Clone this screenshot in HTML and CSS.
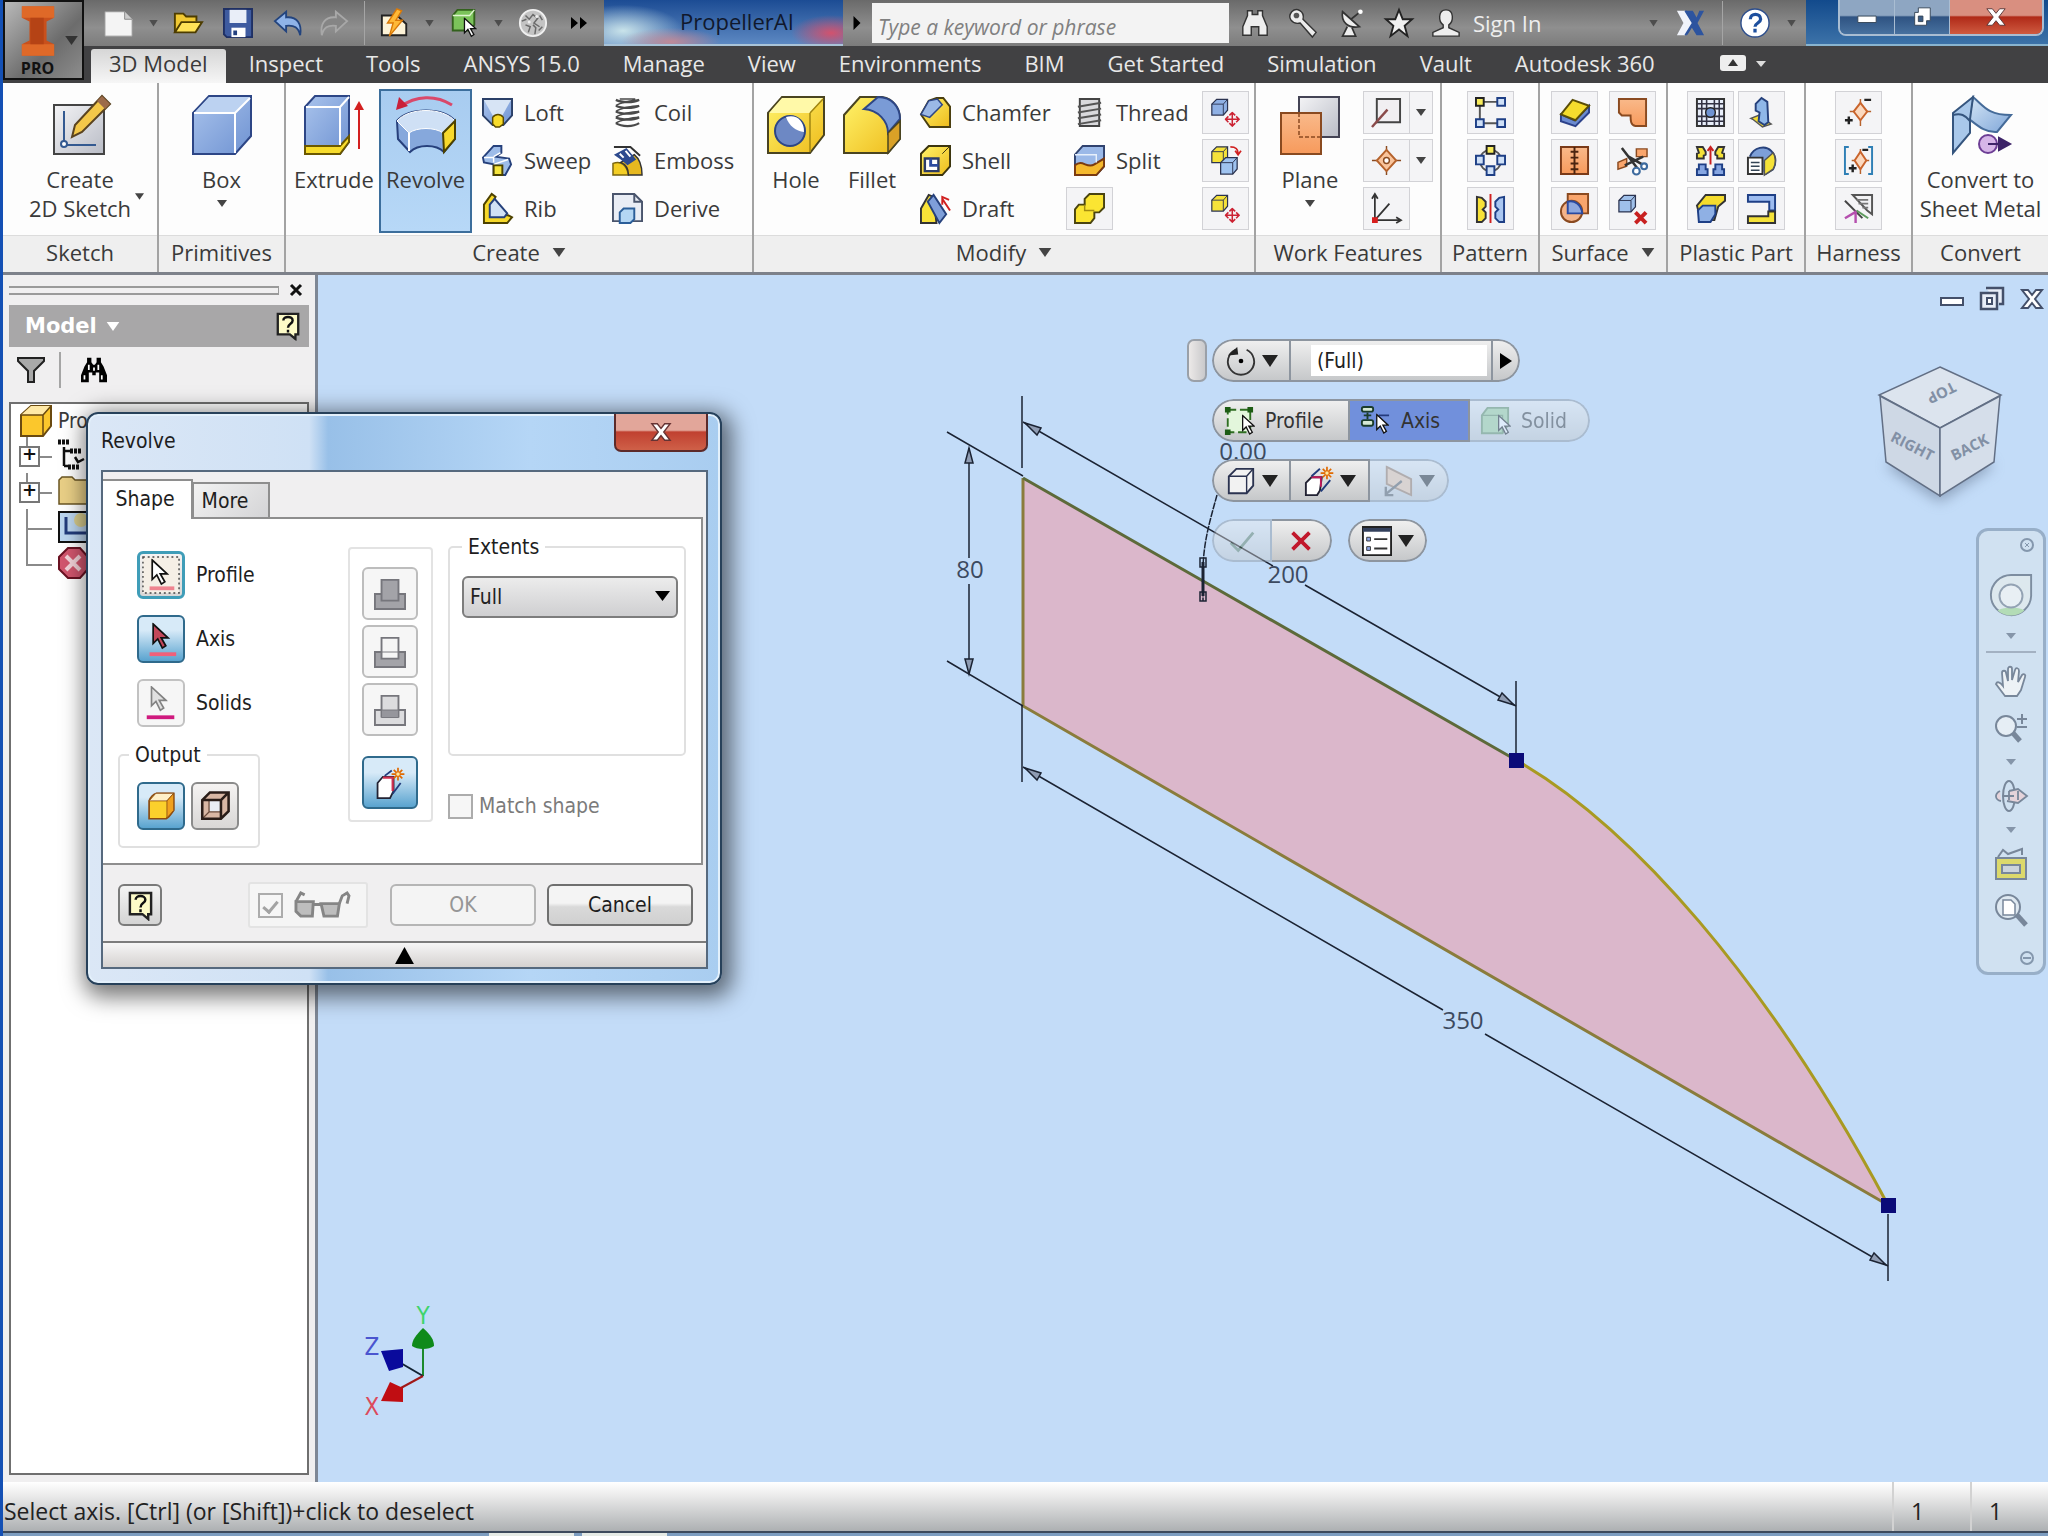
FILE: index.html
```
<!DOCTYPE html>
<html lang="en">
<head>
<meta charset="utf-8">
<title>PropellerAI</title>
<link rel="stylesheet" href="styles.css">
</head>
<body>
<svg class="defs" width="0" height="0" aria-hidden="true">
  <defs>
    <linearGradient id="gYellow" x1="0" y1="0" x2="1" y2="1"><stop offset="0" stop-color="#fff36a"/><stop offset="1" stop-color="#eebb1c"/></linearGradient>
    <linearGradient id="gBlue" x1="0" y1="0" x2="1" y2="1"><stop offset="0" stop-color="#a9c3ec"/><stop offset="1" stop-color="#6f93d2"/></linearGradient>
    <linearGradient id="gOrange" x1="0" y1="0" x2="0" y2="1"><stop offset="0" stop-color="#f9b98a"/><stop offset="1" stop-color="#f79a5c"/></linearGradient>
    <linearGradient id="gSky" x1="0" y1="0" x2="1" y2="1"><stop offset="0" stop-color="#d5e6f6"/><stop offset="1" stop-color="#7fa6d8"/></linearGradient>
    <linearGradient id="gGrey" x1="0" y1="0" x2="1" y2="1"><stop offset="0" stop-color="#f4f4f6"/><stop offset="1" stop-color="#b9bcc6"/></linearGradient>
  </defs>
  <symbol id="cursor" viewBox="0 0 16 24"><path d="M2 1v17l4-4 4 8 3-2-4-7h6z" stroke="#111" stroke-width="1.5"/></symbol>
  <symbol id="cube" viewBox="0 0 32 32"><path d="M3 11 11 3h18v18l-7 8H3z" stroke="#2b3350" stroke-width="2"/><path d="M3 11h19v18M22 11l7-8" fill="none" stroke="#2b3350" stroke-width="1.5"/></symbol>
  <symbol id="star" viewBox="0 0 20 20"><path d="M10 1v18M1 10h18M4 4l12 12M16 4 4 16" stroke="#e06a00" stroke-width="2.4"/><circle cx="10" cy="10" r="3" fill="#ffe9a0" stroke="#e06a00"/></symbol>
  <symbol id="move" viewBox="0 0 16 16"><path d="M8 1v14M1 8h14M5 4l3-3 3 3M5 12l3 3 3-3M4 5 1 8l3 3M12 5l3 3-3 3" fill="none" stroke="#cc2233" stroke-width="1.6"/></symbol>
  <symbol id="tip" viewBox="0 0 28 32"><path d="M3 3h22v22h-3v5l-6-5H3z" fill="#fdfbc8" stroke="#222" stroke-width="2.5"/><path d="M9 10c0-5 10-5 10 0 0 4-5 3-5 8m0 2v3" fill="none" stroke="#111" stroke-width="2.6"/></symbol>
  <symbol id="binoc" viewBox="0 0 32 30"><path d="M8 2h5v4h6V2h5v5l5 12v9h-9v-9h-8v9H3v-9L8 7z"/></symbol>
</svg>

<div class="window">
<header class="top">
  <button class="app" aria-label="Application menu">
    <svg class="app-logo" viewBox="0 0 40 54"><path d="M3 1h34v12l-8 4v20l8 4v12H3V41l8-4V17l-8-4z" fill="#c9501c"/><path d="M3 1h34v12H3zM3 41h34v12H3z" fill="#e8732e" opacity=".7"/><path d="M12 13h14v28H12z" fill="#a83a10" opacity=".6"/></svg>
    <svg class="app-arrow" viewBox="0 0 14 10"><path d="M0 0h14L7 10z"/></svg>
    <span>PRO</span>
  </button>
  <div class="top-rows">
    <div class="titlebar">
      <div class="qat">
        <button class="tool" aria-label="New"><svg viewBox="0 0 32 32"><path d="M1 4h21l8 8v18H1z" fill="#f4f4f4" stroke="#999"/><path d="M22 4v8h8" fill="#ccc" stroke="#888"/></svg></button>
        <i class="dot"></i>
        <button class="tool" aria-label="Open"><svg viewBox="0 0 32 32"><path d="M2 26V6h9l3 3h11v5" fill="#f1c933" stroke="#4d3c00" stroke-width="2"/><path d="M2 26 9 15h22l-7 11z" fill="#ffe257" stroke="#4d3c00" stroke-width="2"/></svg></button>
        <button class="tool save" aria-label="Save"><svg viewBox="0 0 32 32"><path d="M1 1h30v30H4l-3-3z" fill="#3e5ba0" stroke="#1f3064" stroke-width="2"/><path d="M7 2h18v14H7z" fill="#e9eef8"/><path d="M9 21h15v10H9z" fill="#fff"/><path d="M11 24h4v5h-4z" fill="#24407f"/></svg></button>
        <button class="tool" aria-label="Undo"><svg viewBox="0 0 32 32"><path d="M2 14 14 4v6c12-1 17 7 15 19-2-8-6-11-15-10v6z" fill="#8fb3e8" stroke="#23447e" stroke-width="2"/></svg></button>
        <button class="tool" aria-label="Redo" disabled><svg viewBox="0 0 32 32"><path d="M30 14 18 4v6C6 9 1 17 3 29c2-8 6-11 15-10v6z" fill="#858585" stroke="#a8a8a8" stroke-width="2"/></svg></button>
        <i class="vsep"></i>
        <button class="tool" aria-label="Update"><svg viewBox="0 0 32 32"><path d="M2 8h16l10 9v12H2z" fill="#fdf3d7" stroke="#222" stroke-width="2"/><path d="m18 1-10 15h6l-4 14 14-17h-7l6-10z" fill="#ffb937" stroke="#d97908" stroke-width="1.5"/></svg></button>
        <i class="dot"></i>
        <button class="tool" aria-label="Select"><svg viewBox="0 0 32 32"><path d="M4 8 9 2h18v16l-4 6H4z" fill="#7bc35a" stroke="#33611d" stroke-width="2"/><path d="M4 8h18l5-6" fill="none" stroke="#def5cf" stroke-width="1.5"/><use href="#cursor" x="14" y="10" width="16" height="22" fill="#fff"/></svg></button>
        <i class="dot"></i>
        <button class="tool" aria-label="Appearance"><svg viewBox="0 0 32 32"><circle cx="16" cy="16" r="14" fill="#c3c3c3" stroke="#f0f0f0" stroke-width="2"/><path d="M8 8l4 4 4-5 5 4-4 5 6 4M8 18l5 2-2 6M16 18l3 3-1 7M4 14l5-2M23 8l3 5M22 24l4-4" fill="none" stroke="#6a6a6a" stroke-width="1.6"/><circle cx="20" cy="9" r="1.6" fill="#eee"/><circle cx="12" cy="15" r="1.6" fill="#eee"/></svg></button>
        <button class="tool more" aria-label="More commands"><svg viewBox="0 0 18 12"><path d="M1 0l7 6-7 6zM10 0l7 6-7 6z" fill="#000"/></svg></button>
      </div>
      <div class="doc-title">PropellerAI</div>
      <div class="info">
        <svg class="expand" viewBox="0 0 8 16"><path d="M0 0l8 8-8 8z"/></svg>
        <input class="search" type="text" placeholder="Type a keyword or phrase" aria-label="Search">
        <button class="tool" aria-label="Find"><svg viewBox="0 0 32 30"><use href="#binoc" fill="#eee" stroke="#333" stroke-width="1.5"/></svg></button>
        <button class="tool" aria-label="Subscription"><svg viewBox="0 0 32 32"><path d="M4 4c5-5 14-1 12 8l14 14-4 5-13-15C4 18-1 10 4 4z" fill="#ececec" stroke="#333" stroke-width="1.5"/><circle cx="9" cy="8" r="3" fill="#555"/></svg></button>
        <button class="tool" aria-label="Communication"><svg viewBox="0 0 32 32"><path d="M7 4c-2 11 6 18 18 16zM16 12l11-9M12 20 7 30h14l-4-9" fill="#eee" stroke="#333" stroke-width="1.8"/><circle cx="26" cy="4" r="2.5" fill="#fff"/></svg></button>
        <button class="tool" aria-label="Favorites"><svg viewBox="0 0 32 32"><path d="m16 2 4 10h10l-8 7 3 11-9-7-9 7 3-11-8-7h10z" fill="#f0f0f0" stroke="#222" stroke-width="2"/></svg></button>
        <button class="signin"><svg viewBox="0 0 32 32"><path d="M16 2c9 0 8 13 3 16v3l11 5v4H2v-4l11-5v-3C8 15 7 2 16 2z" fill="#eee" stroke="#333" stroke-width="1.5"/></svg>Sign In</button>
        <i class="dot push"></i>
        <button class="tool" aria-label="Exchange"><svg viewBox="0 0 32 32"><path d="M11 3h8l4 7 3-7h5l-7 13 7 13h-8l-5-8-5 8z" fill="#2d549f"/><path d="M2 3h9l8 13-8 13H2l7-13z" fill="#f0f3fa"/><path d="m11 3 8 13-8 13" fill="none" stroke="#2d549f" stroke-width="2"/></svg></button>
        <i class="vsep"></i>
        <button class="tool" aria-label="Help"><svg viewBox="0 0 32 32"><circle cx="16" cy="16" r="15" fill="#fff" stroke="#2d4e8c" stroke-width="1.5"/><path d="M11 12c0-7 11-7 11 0 0 4-6 4-6 8m0 2v4" fill="none" stroke="#1d4f9e" stroke-width="3.5"/></svg></button>
        <i class="dot"></i>
      </div>
      <div class="glass">
        <div class="wincontrols">
          <button aria-label="Minimize"><svg viewBox="0 0 24 20"><path d="M2 9h20v7H2z" fill="#fff" stroke="#345" stroke-width="1"/></svg></button>
          <button aria-label="Restore"><svg viewBox="0 0 24 24"><path d="M8 2h13v14h-4v5H4V7h4z" fill="#fff" stroke="#345"/><path d="M8 11h5v6H8z" fill="#3a5c86" stroke="#345"/></svg></button>
          <button class="close" aria-label="Close"><svg viewBox="0 0 24 22"><path d="m2 2h6l4 5 4-5h6l-7 9 7 9h-6l-4-5-4 5H2l7-9z" fill="#fff" stroke="#533"/></svg></button>
        </div>
      </div>
    </div>
    <nav class="tabs">
      <a class="on" href="#model">3D Model</a><a href="#inspect">Inspect</a><a href="#tools">Tools</a><a href="#ansys">ANSYS 15.0</a><a href="#manage">Manage</a><a href="#view">View</a><a href="#env">Environments</a><a href="#bim">BIM</a><a href="#start">Get Started</a><a href="#sim">Simulation</a><a href="#vault">Vault</a><a href="#a360">Autodesk 360</a>
      <button class="minimize" aria-label="Minimize ribbon"><svg viewBox="0 0 48 16"><rect width="26" height="16" rx="3" fill="#eee"/><path d="m13 4 5 7H8z" fill="#333"/><path d="M36 6h10l-5 6z" fill="#ddd"/></svg></button>
    </nav>
  </div>
</header>

<div class="ribbon">
  <section class="panel p-sketch">
    <div class="tools">
      <button class="big wide"><svg viewBox="0 0 60 60"><path d="M4 10h50v49H4z" fill="url(#gGrey)" stroke="#444" stroke-width="2"/><path d="M14 16v34h32" fill="none" stroke="#345a91" stroke-width="2"/><circle cx="14" cy="49" r="3" fill="#fff" stroke="#345a91" stroke-width="2"/><path d="m22 42 3-12L52 1l8 8-28 28z" fill="#f3c74a" stroke="#5a4320" stroke-width="2"/><path d="m47 6 8 8 5-5-8-8z" fill="#9c6b4a"/></svg><span>Create<br>2D Sketch</span><svg class="side-arrow" viewBox="0 0 10 7"><path d="M0 0h10L5 7z"/></svg></button>
    </div>
    <h2>Sketch</h2>
  </section>
  <section class="panel p-prim">
    <div class="tools">
      <button class="big wide"><svg viewBox="0 0 60 60"><path d="M1 18 17 1h42v40L43 59H1z" fill="url(#gBlue)" stroke="#2d4686" stroke-width="2"/><path d="M2 18 17 2h41L43 18z" fill="#bcd2f1"/><path d="M2 18h41v40M43 18 58 3" fill="none" stroke="#fff" stroke-width="2"/></svg><span>Box</span><svg class="arrow" viewBox="0 0 10 7"><path d="M0 0h10L5 7z"/></svg></button>
    </div>
    <h2>Primitives</h2>
  </section>
  <section class="panel p-create">
    <div class="tools">
      <button class="big"><svg viewBox="0 0 60 60"><path d="M1 12 11 1h34v46L36 59H1z" fill="url(#gBlue)" stroke="#2d4686" stroke-width="2"/><path d="M1 51h35l9-10v6L36 59H1z" fill="#f7dc2d" stroke="#6b5800" stroke-width="2"/><path d="M2 12h34v38M36 12 45 2" fill="none" stroke="#fff" stroke-width="2"/><path d="M55 54V10" stroke="#d32020" stroke-width="2"/><path d="m50 15 5-9 5 9z" fill="#d32020"/></svg><span>Extrude</span></button>
      <button class="big active"><svg viewBox="0 0 60 60"><path d="M4 12C20 0 40 0 56 10" fill="none" stroke="#d9486a" stroke-width="3"/><path d="m0 15 3-13 9 9z" fill="#c9203a"/><path d="M1 26c12-14 46-14 58 0v18L48 57c-8-8-26-8-34 0L2 44z" fill="#86a8dc" stroke="#27407c" stroke-width="2"/><path d="M1 26c12-14 46-14 58 0L47 38c-8-6-26-6-34 0z" fill="#cfe0f5" stroke="#fff"/><path d="M47 38 59 26v18L48 57z" fill="#f8d92c" stroke="#4d4200" stroke-width="2"/><path d="M13 38v18" stroke="#fff" stroke-width="2"/></svg><span>Revolve</span></button>
      <div class="list l1">
        <button><svg viewBox="0 0 32 32"><path d="M1 2h30v17l-9 10H11L1 19z" fill="url(#gBlue)" stroke="#2b4068" stroke-width="2"/><path d="M2 3h28l-9 16H11z" fill="#d7e4f5"/><path d="M11 21c3-4 8-4 11 0v7l-4 3h-4l-3-3z" fill="#f8dc2b" stroke="#5b4b00" stroke-width="1.5"/></svg>Loft</button>
        <button><svg viewBox="0 0 32 32"><path d="M1 13 12 1h8v7l-6 4 14 2 2 6-6 11H12V20L2 18z" fill="#9dbce9" stroke="#26417c" stroke-width="2"/><path d="M2 13h10v5m0-6 7-4M12 20l15-5" fill="none" stroke="#fff" stroke-width="1.5"/><path d="M12 21h9v10h-9z" fill="#f5e53e" stroke="#4b4200" stroke-width="2"/></svg>Sweep</button>
        <button><svg viewBox="0 0 32 32"><path d="M2 31V12L10 1l4 3-4 8v11h17l4 2-5 6z" fill="#f6d82a" stroke="#4d4200" stroke-width="2"/><path d="M8 12 13 6l13 15-3 4H8z" fill="#d1e1f4" stroke="#26417c" stroke-width="2"/></svg>Rib</button>
      </div>
      <div class="list l2">
        <button><svg viewBox="0 0 32 32"><g fill="none" stroke="#4a4a4a" stroke-width="2.4"><path d="M4 3c6 3 18 3 24 0M4 9c6 3 18 3 24 0M4 15c6 3 18 3 24 0M4 21c6 3 18 3 24 0M4 27c6 4 18 4 24 0"/><path d="M28 3C20 3 8 6 4 9M28 9C20 9 8 12 4 15M28 15c-8 0-20 3-24 6M28 21c-8 0-20 3-24 6M8 2h16" stroke-width="1.6"/></g></svg>Coil</button>
        <button><svg viewBox="0 0 32 32"><path d="M1 19c8-3 14 1 16 12H1z" fill="#f4ce25" stroke="#7a6510" stroke-width="1.5"/><path d="M17 31c0-6-3-11-8-13l14-8c5 4 8 10 8 21z" fill="#e6b820" stroke="#333" stroke-width="1.5"/><path d="M2 2h17l10 9" fill="none" stroke="#333" stroke-width="2"/><path d="M2 10 15 3l10 12-9 6-7-6z" fill="#2d4a8e"/><path d="m8 9 4 4m2-7 5 6" stroke="#fff" stroke-width="2"/></svg>Emboss</button>
        <button><svg viewBox="0 0 32 32"><path d="M1 1h22l8 8v20H1z" fill="#e9edf5" stroke="#4a556d" stroke-width="2"/><path d="M23 1v8h8" fill="none" stroke="#4a556d" stroke-width="2"/><path d="m8 20 4-4h11v11l-4 4H8z" fill="#b4d6f3" stroke="#2b5e99" stroke-width="2"/></svg>Derive</button>
      </div>
    </div>
    <h2>Create<svg class="h-arrow" viewBox="0 0 14 10"><path d="M0 0h14L7 10z"/></svg></h2>
  </section>
  <section class="panel p-modify">
    <div class="tools">
      <button class="big mid"><svg viewBox="0 0 60 60"><path d="M2 18 16 2h42v38L44 58H2z" fill="url(#gYellow)" stroke="#4a4420" stroke-width="2"/><path d="M3 18 16 3h41L44 18z" fill="#fff9a8"/><path d="M44 18v39M44 18 57 4" stroke="#a08512" stroke-width="1.5"/><circle cx="24" cy="36" r="15" fill="#6d88c4" stroke="#2d4686" stroke-width="2"/><path d="M20 22c10-3 18 3 18 15-8-1-15-6-18-15z" fill="#fff"/></svg><span>Hole</span></button>
      <button class="big mid"><svg viewBox="0 0 60 60"><path d="M2 20 18 2h22c12 2 18 12 18 22v20L46 58H2z" fill="url(#gYellow)" stroke="#4a4420" stroke-width="2"/><path d="M22 14 36 2c14 0 22 10 22 22L46 38C46 26 36 15 22 14z" fill="#7a9bd6" stroke="#2d4686" stroke-width="2"/><path d="M46 38 58 26v18L46 58z" fill="#d9a127" stroke="#4a4420" stroke-width="1.5"/></svg><span>Fillet</span></button>
      <div class="list l3">
        <button><svg viewBox="0 0 32 32"><path d="M1 18 9 4l8-3h7l7 9v21H10z" fill="url(#gYellow)" stroke="#4a3f10" stroke-width="2"/><path d="M1 18 9 4l9-2 5 6-13 13z" fill="#9bb8e6" stroke="#2d4686" stroke-width="1.5"/></svg>Chamfer</button>
        <button><svg viewBox="0 0 32 32"><path d="M1 9 9 1h22v21l-8 9H1z" fill="url(#gYellow)" stroke="#3c350f" stroke-width="2"/><path d="M5 14h14v13H5z" fill="#fff" stroke="#2d3c66" stroke-width="2.5"/><path d="M11 14v7h8" fill="none" stroke="#2d4ba0" stroke-width="3"/><path d="m23 9 8-8" stroke="#3c350f"/></svg>Shell</button>
        <button><svg viewBox="0 0 32 32"><path d="M1 31V16L9 2l5 2 3 27z" fill="#f8e238" stroke="#333" stroke-width="2"/><path d="m8 9 6-7 13 20-7 9z" fill="#7f9fd9" stroke="#26417c" stroke-width="2"/><path d="m31 18-8-12m0 6V4l7 3" fill="none" stroke="#d02020" stroke-width="2"/></svg>Draft</button>
      </div>
      <div class="list l4">
        <button><svg viewBox="0 0 32 32"><path d="M6 2h20v28H6z" fill="#d9d9dc" stroke="#444" stroke-width="2"/><path d="M4 10 28 6M4 16l24-4M4 22l24-4M4 28l24-4" stroke="#555" stroke-width="2"/></svg>Thread</button>
        <button><svg viewBox="0 0 32 32"><path d="M1 10 9 1h22v21l-8 9H1z" fill="#9bb9e8" stroke="#30426e" stroke-width="2"/><path d="M1 21c8-7 12 4 20-1l10-6v8l-8 9H1z" fill="#f5b92e" stroke="#7a3a10" stroke-width="2"/><path d="M1 10h22v8" fill="none" stroke="#e7f0fb" stroke-width="1.5"/></svg>Split</button>
        <button class="sq" aria-label="Combine"><svg viewBox="0 0 32 32"><path d="M1 17l4-5h6V6l5-5h15v14l-5 5h-5v6l-4 5H1z" fill="#fbe532" stroke="#4a4410" stroke-width="2"/><path d="M11 12v6h10" fill="none" stroke="#a48d10" stroke-width="1.5"/></svg></button>
      </div>
      <div class="sqs">
        <button class="sq" aria-label="Move face"><svg viewBox="0 0 32 32"><use href="#cube" width="20" height="21" fill="#8fb0e4"/><use href="#move" x="15" y="15" width="16" height="16"/></svg></button>
        <button class="sq" aria-label="Copy object"><svg viewBox="0 0 32 32"><use href="#cube" width="20" height="20" fill="#f5e23a"/><use href="#cube" x="9" y="11" width="21" height="21" fill="#9fc3f0"/><path d="M21 2c6 0 8 2 8 7m-3-3 3 4 3-4" fill="none" stroke="#d02020" stroke-width="1.8"/></svg></button>
        <button class="sq" aria-label="Move bodies"><svg viewBox="0 0 32 32"><use href="#cube" width="20" height="21" fill="#f5e23a"/><use href="#move" x="15" y="15" width="16" height="16"/></svg></button>
      </div>
    </div>
    <h2>Modify<svg class="h-arrow" viewBox="0 0 14 10"><path d="M0 0h14L7 10z"/></svg></h2>
  </section>
  <section class="panel p-work">
    <div class="tools">
      <button class="big plane"><svg viewBox="0 0 60 60"><path d="M19 2h40v40H19z" fill="url(#gGrey)" stroke="#445" stroke-width="2"/><path d="M1 18h40v41H1z" fill="url(#gOrange)" stroke="#8a4a20" stroke-width="2"/><path d="M19 18v24h22" fill="none" stroke="#8a4a20" stroke-width="1.5" stroke-dasharray="4 2"/></svg><span>Plane</span><svg class="arrow" viewBox="0 0 10 7"><path d="M0 0h10L5 7z"/></svg></button>
      <div class="sqs">
        <div class="split"><button class="sq" aria-label="Axis"><svg viewBox="0 0 32 32"><path d="M6 2h24v24H6z" fill="#f1eff2" stroke="#444" stroke-width="2"/><path d="M1 31 17 13" stroke="#8a4a4a" stroke-width="2.5"/></svg></button><button class="drop" aria-label="Axis options"><svg viewBox="0 0 10 7"><path d="M0 0h10L5 7z"/></svg></button></div>
        <div class="split"><button class="sq" aria-label="Point"><svg viewBox="0 0 32 32"><path d="M16 1v30M1 16h30" stroke="#8a4a20" stroke-width="1.5"/><path d="m16 5 10 11-10 11L6 16z" fill="#f9c49c" stroke="#b5622c" stroke-width="2"/><circle cx="16" cy="16" r="3" fill="#fff" stroke="#8a4a20" stroke-width="1.5"/></svg></button><button class="drop" aria-label="Point options"><svg viewBox="0 0 10 7"><path d="M0 0h10L5 7z"/></svg></button></div>
        <button class="sq" aria-label="UCS"><svg viewBox="0 0 32 32"><path d="M4 28V2m-3 4 3-5 3 5M4 28h26m-4-3 5 3-5 3M4 28 19 11" fill="none" stroke="#333" stroke-width="1.8"/><path d="M1 25h6v6H1z" fill="#d81e1e"/></svg></button>
      </div>
    </div>
    <h2>Work Features</h2>
  </section>
  <section class="panel p-pattern">
    <div class="tools center">
      <div class="sqs">
        <button class="sq" aria-label="Rectangular"><svg viewBox="0 0 32 32"><path d="M5 5h22M5 5v22h22" stroke="#555" stroke-width="2" fill="none"/><path d="M1 1h8v8H1z" fill="#f8ec5b" stroke="#222" stroke-width="2"/><path d="M23 1h8v8h-8zM1 23h8v8H1zM23 23h8v8h-8z" fill="#cfe0f7" stroke="#1e3f86" stroke-width="2"/></svg></button>
        <button class="sq" aria-label="Circular"><svg viewBox="0 0 32 32"><circle cx="16" cy="16" r="11" fill="none" stroke="#555" stroke-width="1.8"/><path d="M12 1h8v8h-8z" fill="#f8ec5b" stroke="#222" stroke-width="2"/><path d="M1 11h8v9H1zM23 11h8v9h-8zM12 22h8v9h-8z" fill="#cfe0f7" stroke="#1e3f86" stroke-width="2"/></svg></button>
        <button class="sq" aria-label="Mirror"><svg viewBox="0 0 32 32"><path d="M2 4l5 1 4 4v5l-3 3 3 3v6l-4 4H2z" fill="#f8e238" stroke="#333" stroke-width="2"/><path d="M30 4l-5 1-4 4v5l3 3-3 3v6l4 4h5z" fill="#a9c6f1" stroke="#1e3f86" stroke-width="2"/><path d="M16 1v30" stroke="#d02020" stroke-width="2"/></svg></button>
      </div>
    </div>
    <h2>Pattern</h2>
  </section>
  <section class="panel p-surface">
    <div class="tools center">
      <div class="sqs">
        <button class="sq" aria-label="Thicken"><svg viewBox="0 0 32 32"><path d="m2 18 14 6L31 9v7L17 30 2 25z" fill="#6c8bd0" stroke="#2c418a" stroke-width="2"/><path d="M2 18 14 3l17 6-14 15z" fill="#f5dc2d" stroke="#5a4d08" stroke-width="2"/></svg></button>
        <button class="sq" aria-label="Stitch"><svg viewBox="0 0 32 32"><path d="M2 2h28v28H2z" fill="url(#gOrange)" stroke="#7a3a18" stroke-width="2"/><path d="M16 2v28M12 7h8M12 13h8M12 19h8M12 25h8" stroke="#4a2410" stroke-width="2"/></svg></button>
        <button class="sq" aria-label="Sculpt"><svg viewBox="0 0 32 32"><path d="M9 1h21v20H9z" fill="#f9a56c" stroke="#8a4a20" stroke-width="2"/><circle cx="13" cy="19" r="11" fill="#f5b48a" stroke="#8a4a20" stroke-width="2"/><path d="M9 9c7-2 14 3 15 12H9z" fill="#8fa8de" stroke="#2b4aa0" stroke-width="2"/></svg></button>
      </div>
      <div class="sqs">
        <button class="sq" aria-label="Patch"><svg viewBox="0 0 32 32"><path d="M2 2h28v28H19c-5-1-5-6-5-11H5l-3-3z" fill="url(#gOrange)" stroke="#8a4a20" stroke-width="2"/></svg></button>
        <button class="sq" aria-label="Trim"><svg viewBox="0 0 32 32"><path d="M20 4h11v8H20zM1 18l9-4v8l-9 3z" fill="#f9a56c" stroke="#8a4a20" stroke-width="1.5"/><path d="m5 3 16 21M27 12 8 21M12 12l14 8" stroke="#333" stroke-width="2.6"/><circle cx="20" cy="27" r="3.5" fill="#fff" stroke="#3d6a9e" stroke-width="2.2"/><circle cx="28" cy="22" r="3" fill="#fff" stroke="#3d6a9e" stroke-width="2.2"/></svg></button>
        <button class="sq" aria-label="Delete face"><svg viewBox="0 0 32 32"><use href="#cube" width="21" height="22" fill="#9fc0ea"/><path d="m19 20 11 11M30 20 19 31" stroke="#c82020" stroke-width="4"/></svg></button>
      </div>
    </div>
    <h2>Surface<svg class="h-arrow" viewBox="0 0 14 10"><path d="M0 0h14L7 10z"/></svg></h2>
  </section>
  <section class="panel p-plastic">
    <div class="tools center tight">
      <div class="sqs">
        <button class="sq" aria-label="Grill"><svg viewBox="0 0 32 32"><path d="M2 2h28v28H2z" fill="#e8eefa" stroke="#333" stroke-width="2"/><path d="M2 7h28M2 12h28M2 20h28M2 25h28M7 2v28M12 2v28M20 2v28M25 2v28" stroke="#334" stroke-width="1.6"/><circle cx="16" cy="16" r="5" fill="#6f93d2" stroke="#222" stroke-width="1.5"/></svg></button>
        <button class="sq" aria-label="Boss"><svg viewBox="0 0 32 32"><path d="M2 2h6l3 5v3l-2 1v3H2V9l2-1zM30 2h-6l-3 5v3l2 1v3h7V9l-2-1z" fill="#f5e238" stroke="#333" stroke-width="2"/><path d="M4 20h7v5h2v6H2v-6h2zM28 20h-7v5h-2v6h11v-6h-2z" fill="#86a6e2" stroke="#1e3f86" stroke-width="2"/><path d="M16 20V2m-3 4 3-4 3 4" fill="none" stroke="#c82020" stroke-width="2"/></svg></button>
        <button class="sq" aria-label="Rest"><svg viewBox="0 0 32 32"><path d="M2 13 11 2h20v6l-7 6-4 14H6z" fill="#f5dc2d" stroke="#333" stroke-width="2"/><path d="m3 18 5-5h13v9l-5 8H4z" fill="#8fb0e4" stroke="#1e3f86" stroke-width="2"/></svg></button>
      </div>
      <div class="sqs">
        <button class="sq" aria-label="Snap fit"><svg viewBox="0 0 32 32"><path d="m5 22 8-3 13 9-9 3-10-8z" fill="#f5dc2d" stroke="#555" stroke-width="1.5"/><path d="m13 25 1-9-4-2V7l6-6 6 4 1 21-4 3z" fill="#8fb7e8" stroke="#26417c" stroke-width="2"/></svg></button>
        <button class="sq" aria-label="Rule fillet"><svg viewBox="0 0 32 32"><path d="M4 12C8 2 20 0 26 6s5 14 2 19l-8 5" fill="#7d9fd8" stroke="#26417c" stroke-width="2"/><path d="m19 16 9-8c3 4 3 12 0 17l-9 6z" fill="#f5e238" stroke="#555" stroke-width="1.5"/><path d="M2 13h15v17H2z" fill="#fff" stroke="#333" stroke-width="2"/><path d="M5 18h9M5 22h9M5 26h9" stroke="#345" stroke-width="1.6"/></svg></button>
        <button class="sq" aria-label="Lip"><svg viewBox="0 0 32 32"><path d="M2 2h28v16h-6v-9H2z" fill="#9dbcf0" stroke="#1e3f86" stroke-width="2"/><path d="M2 24h21v-5h7v12H2z" fill="#f5e238" stroke="#333" stroke-width="2"/></svg></button>
      </div>
    </div>
    <h2>Plastic Part</h2>
  </section>
  <section class="panel p-harness">
    <div class="tools center">
      <div class="sqs">
        <button class="sq" aria-label="Place pin"><svg viewBox="0 0 32 32"><path d="M18 2v28M7 15h22" stroke="#b5622c" stroke-width="1.5"/><path d="m18 6 7 9-7 9-7-9z" fill="#fbd9bf" stroke="#c9642c" stroke-width="2"/><path d="M22 3h7M2 24h8M6 20v8" stroke="#222" stroke-width="2.5"/></svg></button>
        <button class="sq" aria-label="Place pin group"><svg viewBox="0 0 32 32"><path d="M18 4v26M9 16h18" stroke="#b5622c" stroke-width="1.5"/><path d="m18 7 6 9-6 9-6-9z" fill="#fbd9bf" stroke="#c9642c" stroke-width="2"/><path d="M20 5h6M6 24h8M10 20v8" stroke="#222" stroke-width="2.5"/><path d="M6 2H2v28h4M26 2h4v28h-4" fill="none" stroke="#2e7fb5" stroke-width="2"/></svg></button>
        <button class="sq" aria-label="Harness properties"><svg viewBox="0 0 32 32"><path d="M10 2h20v20l-5-4z" fill="#f2f2f4" stroke="#555" stroke-width="2"/><path d="M14 7h12M16 11h10M20 15h6" stroke="#777" stroke-width="1.8"/><path d="m2 8 18 18" stroke="#444" stroke-width="2"/><path d="m2 26 12-7M13 18v13" stroke="#b54fae" stroke-width="2.5"/><path d="m14 18 12 8" stroke="#5d9a5d" stroke-width="2"/></svg></button>
      </div>
    </div>
    <h2>Harness</h2>
  </section>
  <section class="panel p-convert">
    <div class="tools">
      <button class="big wide"><svg viewBox="0 0 60 60"><path d="M22 2c10 8 14 18 38 18l-14 17C34 38 26 30 18 24z" fill="url(#gSky)" stroke="#456b99" stroke-width="2"/><path d="M2 18 22 2l-3 22v14L2 58z" fill="#a9c8ea" stroke="#35557e" stroke-width="2"/><path d="M2 20c8-2 12 0 17 6" fill="none" stroke="#35557e" stroke-width="2"/><circle cx="37" cy="49" r="9" fill="#d6b6e8" stroke="#6d3e95" stroke-width="2"/><path d="M37 49h14m-3-6 11 6-11 6z" fill="#3d2468" stroke="#3d2468" stroke-width="2"/></svg><span>Convert to<br>Sheet Metal</span></button>
    </div>
    <h2>Convert</h2>
  </section>
</div>

<main class="work">
  <aside class="browser">
    <div class="grip"><i></i><button aria-label="Close panel"><svg viewBox="0 0 12 12"><path d="m1 1 10 10M11 1 1 11" stroke="#111" stroke-width="3"/></svg></button></div>
    <div class="browser-head"><span>Model</span><svg class="h-arrow" viewBox="0 0 14 10"><path d="M0 0h14L7 10z"/></svg><button aria-label="Help"><svg viewBox="0 0 28 32"><use href="#tip"/></svg></button></div>
    <div class="browser-tools">
      <button aria-label="Filter"><svg viewBox="0 0 28 26"><path d="M1 1h26v3L17 14v11h-6V14L1 4z" fill="#a9a9a9" stroke="#222" stroke-width="2"/></svg></button>
      <i></i>
      <button aria-label="Find"><svg viewBox="0 0 32 30"><path d="M8 1h5v5l2 3h2l2-3V1h5v5l3 5 4 10v8h-9V18h-4v3h-4v-3h-4v11H1v-8l4-10 3-5z"/><path d="M4 21h2v5H4zM24 21h2v5h-2zM15 12h2v4h-2zM9 9h2v6H9zM20 9h2v6h-2z" fill="#fff"/></svg></button>
    </div>
    <div class="tree">
      <div class="root"><svg viewBox="0 0 34 34"><path d="M2 11 12 2h20v20L24 32H2z" fill="#fbc72c" stroke="#6a4a10" stroke-width="2"/><path d="M2 11h22l8-9H12z" fill="#ffe9a6"/><path d="M2 11h22v21m0-21 8-9" fill="none" stroke="#6a4a10" stroke-width="1.5"/></svg><span>Pro</span></div>
      <ul>
        <li class="plus"><svg viewBox="0 0 30 32"><path d="M0 3h12M12 12h12M10 28h11" stroke="#111" stroke-width="5" stroke-dasharray="3 1"/><path d="M6 8v19M6 12h6M6 27h4M17 18l3 5 6-3" fill="none" stroke="#111" stroke-width="2.5"/></svg></li>
        <li class="plus"><svg viewBox="0 0 30 32"><path d="M1 5l3-3h10l3 3h13v24H1z" fill="#e9cf86" stroke="#6a5523" stroke-width="1.5"/></svg></li>
        <li><svg viewBox="0 0 30 32"><path d="M1 1h34v30H1z" fill="#bcd6ef" stroke="#111" stroke-width="2"/><path d="M8 6v16h24" fill="none" stroke="#223c7c" stroke-width="3"/><circle cx="23" cy="9" r="7" fill="#d9ce8e"/></svg></li>
        <li><svg viewBox="0 0 30 32"><path d="m10 1 12 0 8 9v12l-8 9H10l-9-9V10z" fill="#d2566e" stroke="#6a1222" stroke-width="2"/><path d="m8 9 14 14M22 9 8 23" stroke="#f3d3d9" stroke-width="4"/></svg></li>
      </ul>
    </div>
  </aside>

  <div class="canvas">
    <svg class="drawing" viewBox="318 275 1730 1207" preserveAspectRatio="xMinYMin meet">
      <path d="M1023 478 1516 760C1630 825 1766 977 1888 1205L1023 706z" fill="#dbb7cb"/>
      <g fill="none" stroke-width="3">
        <path d="M1023 478v228l865 499" stroke="#8a7c3c"/>
        <path d="m1023 478 180 103 313 179" stroke="#5d6a3a"/>
        <path d="M1516 760C1630 825 1766 977 1888 1205" stroke="#a89a22"/>
      </g>
      <g fill="none" stroke="#1b2333" stroke-width="1.5">
        <path d="M1022 396v72M1516 681v72M1022 706v76M1888 1214v67M947 432l76 44M947 661l76 45"/>
        <path d="M1023 422l250 144M1305 585l211 121M1023 767l420 243M1485 1034l403 232M969 448v110M969 584v90"/>
        <path d="M1217 495c-6 22-13 44-14 72v34" stroke-dasharray="7 1"/>
        <path d="M1203 562v34" stroke-width="3"/>
        <path d="M1200 558h6v9h-6zM1200 592h6v9h-6z"/>
      </g>
      <g fill="#8f9cb3" stroke="#1b2333" stroke-width="1.5">
        <path d="m1025 423 16 5-4 7zM1514 705l-16-5 4-7zM1025 768l16 5-4 7zM1886 1265l-16-5 4-7zM969 448l-4 15h8zM969 674l-4-15h8z"/>
      </g>
      <path d="M1509 753h15v15h-15zM1881 1198h15v15h-15z" fill="#0b0b78"/>
      <g class="dims"><text x="1288" y="583" text-anchor="middle">200</text><text x="970" y="578" text-anchor="middle">80</text><text x="1463" y="1029" text-anchor="middle">350</text><text x="1243" y="460" text-anchor="middle">0.00</text></g>
      <g class="triad">
        <path d="M423 1376v-42" stroke="#1c8a2c" stroke-width="2"/><path d="m423 1376-24-14" stroke="#123" stroke-width="2"/><path d="m423 1376-24 13" stroke="#a01818" stroke-width="2"/>
        <path d="M423 1328c8 7 11 12 11 18-5 4-17 4-22 0 0-6 4-11 11-18z" fill="#0f8a1a"/>
        <path d="m381 1351 22-2v18l-14 4z" fill="#0a0a9c"/><path d="m381 1401 9-19 13 6v14z" fill="#c00d12"/>
        <text x="423" y="1324" text-anchor="middle" fill="#3fd46c">Y</text><text x="372" y="1355" text-anchor="middle" fill="#4a55cf">Z</text><text x="372" y="1415" text-anchor="middle" fill="#dc4a5c">X</text>
      </g>
    </svg>

    <div class="mdi">
      <button aria-label="Minimize"><svg viewBox="0 0 24 24"><path d="M1 11h22v7H1z" fill="#fff" stroke="#44506a" stroke-width="2"/></svg></button>
      <button aria-label="Restore"><svg viewBox="0 0 24 24"><path d="M6 1h17v16h-4M1 6h16v16H1z" fill="#e8eef8" stroke="#44506a" stroke-width="2.5"/><path d="M7 11h5v6H7z" fill="#fff" stroke="#44506a" stroke-width="2"/></svg></button>
      <button aria-label="Close"><svg viewBox="0 0 24 24"><path d="m2 3h6l4 5 4-5h6l-7 9 7 9h-6l-4-5-4 5H2l7-9z" fill="#fff" stroke="#44506a" stroke-width="2"/></svg></button>
    </div>

    <svg class="viewcube" viewBox="0 0 140 156">
      <defs><filter id="soft" x="-50%" y="-50%" width="200%" height="200%"><feGaussianBlur stdDeviation="7"/></filter></defs>
      <path d="m16 106 54 36 54-36-54-34z" fill="#6f829c" opacity=".65" filter="url(#soft)"/>
      <path d="m70 7 61 28-61 33L9 35z" fill="#dce4ee" stroke="#626f85" stroke-width="1.5"/>
      <path d="m10 36 60 32v68l-54-34z" fill="#ced8e5" stroke="#626f85" stroke-width="1.5"/>
      <path d="M130 36 70 68v68l54-34z" fill="#d5deea" stroke="#626f85" stroke-width="1.5"/>
      <g><text transform="translate(40 91) rotate(27)" text-anchor="middle">RIGHT</text><text transform="translate(102 92) rotate(-27)" text-anchor="middle">BACK</text><text transform="translate(69 28) rotate(153)" text-anchor="middle">TOP</text></g>
    </svg>

    <div class="mini">
      <div class="mini-row first">
        <i class="handle"></i>
        <div class="pill">
          <button class="seg s79" aria-label="Extents"><svg viewBox="0 0 32 32"><path d="M10 4a14 14 0 1 0 12 0" fill="none" stroke="#333" stroke-width="2"/><path d="m2 10 10-9 1 8z" fill="#222"/><circle cx="16" cy="16" r="2.5"/></svg><svg class="tri" viewBox="0 0 16 12"><path d="M0 0h16L8 12z"/></svg></button>
          <label class="seg angle"><input type="text" value="(Full)" aria-label="Angle"></label>
          <button class="seg s27" aria-label="Next"><svg viewBox="0 0 12 16"><path d="m0 0 12 8-12 8z"/></svg></button>
        </div>
      </div>
      <div class="mini-row">
        <div class="pill">
          <button class="seg s138"><svg viewBox="0 0 32 32"><path d="M4 4h24v24H4z" fill="#e3f6dc" stroke="#2f6e22" stroke-width="2" stroke-dasharray="9 4"/><path d="M1 1h6v6H1zM25 1h6v6h-6zM1 25h6v6H1z" fill="#1d5c14"/><use href="#cursor" x="18" y="9" width="15" height="23" fill="#fff"/></svg>Profile</button>
          <button class="seg s120 blue"><svg viewBox="0 0 32 32"><g fill="#d5e8d5" stroke="#1b3c2c" stroke-width="2"><rect x="2" y="1" width="12" height="5" rx="2"/><rect x="2" y="15" width="12" height="6" rx="2"/><path d="M4 10h8M8 7v7"/></g><path d="M20 10h11" stroke="#243a7c" stroke-width="2"/><use href="#cursor" x="16" y="8" width="15" height="23" fill="#fff"/></svg>Axis</button>
          <button class="seg s120 off" disabled><svg viewBox="0 0 32 32"><path d="M2 10 8 2h22v18l-6 9H2z" fill="#9fd096" stroke="#5d8a57" stroke-width="2"/><path d="M2 10h22v18" fill="none" stroke="#5d8a57" stroke-width="1.5"/><use href="#cursor" x="18" y="9" width="15" height="23" fill="#fff"/></svg>Solid</button>
        </div>
      </div>
      <div class="mini-row">
        <div class="pill">
          <button class="seg s79" aria-label="Output"><svg viewBox="0 0 32 32"><use href="#cube" fill="#f2f2f2"/></svg><svg class="tri" viewBox="0 0 16 12"><path d="M0 0h16L8 12z"/></svg></button>
          <button class="seg s79" aria-label="Operation"><svg viewBox="0 0 32 32"><path d="m2 18 6-6h11l-2 14-3 5H2z" fill="#fff" stroke="#223" stroke-width="2"/><path d="M8 12h10v10" fill="none" stroke="#c2185b" stroke-width="2"/><path d="m8 11 9-8M18 27l10-12" stroke="#223c7c" stroke-width="2"/><use href="#star" x="17" width="15" height="15"/></svg><svg class="tri" viewBox="0 0 16 12"><path d="M0 0h16L8 12z"/></svg></button>
          <button class="seg s79 off" disabled aria-label="Direction"><svg viewBox="0 0 32 32"><path d="m4 1 26 13v17L4 19z" fill="#f2c7a5" stroke="#9a7457" stroke-width="2"/><path d="m20 16-17 14m0-8v9h8" fill="none" stroke="#555" stroke-width="2.5"/></svg><svg class="tri" viewBox="0 0 16 12"><path d="M0 0h16L8 12z"/></svg></button>
        </div>
      </div>
      <div class="mini-row">
        <div class="pill">
          <button class="seg s60 off" disabled aria-label="OK"><svg viewBox="0 0 32 32"><path d="m4 18 8 8L28 7" fill="none" stroke="#5c7a5c" stroke-width="3"/></svg></button>
          <button class="seg s60" aria-label="Cancel"><svg viewBox="0 0 32 32"><path d="m7 7 18 18M25 7 7 25" stroke="#c1182c" stroke-width="4"/></svg></button>
        </div>
        <div class="pill"><button class="seg s79" aria-label="Options"><svg viewBox="0 0 32 32"><path d="M1 1h30v30H1z" fill="#fff" stroke="#222" stroke-width="2"/><path d="M1 4h30" stroke="#33405c" stroke-width="4"/><path d="M13 14h14M13 24h14" stroke="#333" stroke-width="2"/><path d="M5 12h4v4H5zM5 22h4v4H5z" fill="#8fa8e8" stroke="#333"/></svg><svg class="tri" viewBox="0 0 16 12"><path d="M0 0h16L8 12z"/></svg></button></div>
      </div>
    </div>

    <div class="navbar">
      <button class="ring" aria-label="Close"><svg viewBox="0 0 16 16"><circle cx="8" cy="8" r="6" fill="none" stroke="#8497ad" stroke-width="2"/><path d="m6 6 4 4M10 6l-4 4" stroke="#8497ad"/></svg></button>
      <button class="wheel" aria-label="Steering wheel"><svg viewBox="0 0 48 48"><path d="M24 2h21v22A21 21 0 1 1 24 2z" fill="#dde8ee" stroke="#7d8da0" stroke-width="2"/><path d="M10 39c8 7 20 7 28 0-7-4-20-4-28 0z" fill="#b3dcb6"/><circle cx="24" cy="24" r="12" fill="#e8eff4" stroke="#93a2b3" stroke-width="2"/></svg></button>
      <svg class="ntri" viewBox="0 0 10 6"><path d="M0 0h10L5 6z"/></svg>
      <hr>
      <button aria-label="Pan"><svg viewBox="0 0 34 34"><path d="M11 31 2 19c1-3 4-2 7 2L8 8c0-3 4-3 4 0l2 8V4c0-3 4-3 4 0v11l3-10c1-3 4-2 4 1l-1 11 4-7c2-2 4 0 3 2l-4 13-4 6z" fill="#edf2f6" stroke="#78879a" stroke-width="1.8"/></svg></button>
      <button aria-label="Zoom"><svg viewBox="0 0 34 34"><circle cx="12" cy="15" r="10" fill="#e6eef5" stroke="#78879a" stroke-width="2"/><path d="m19 22 7 8" stroke="#78879a" stroke-width="5"/><path d="M23 8h10M28 3v10M23 16h10" stroke="#78879a" stroke-width="2"/></svg></button>
      <svg class="ntri" viewBox="0 0 10 6"><path d="M0 0h10L5 6z"/></svg>
      <button aria-label="Orbit"><svg viewBox="0 0 34 34"><ellipse cx="15" cy="17" rx="6" ry="15" fill="none" stroke="#78879a" stroke-width="2"/><path d="M6 12c-6 3-5 9 1 10M13 22l11 2 9-7-9-7-9 2" fill="#e5d3da" stroke="#78879a" stroke-width="1.8"/><path d="M15 12v9M10 17h10M24 12v9" stroke="#78879a" stroke-width="1.8"/></svg></button>
      <svg class="ntri" viewBox="0 0 10 6"><path d="M0 0h10L5 6z"/></svg>
      <button class="look" aria-label="Look at"><svg viewBox="0 0 34 34"><path d="m4 10 5-7 5 4 14-5v6" fill="none" stroke="#78879a" stroke-width="2"/><path d="M2 11h30v21H2z" fill="#dcd96b" stroke="#78879a" stroke-width="2"/><path d="M8 18h18v8H8z" fill="#cbd4dc" stroke="#78879a" stroke-width="2"/></svg></button>
      <button aria-label="Zoom all"><svg viewBox="0 0 34 34"><circle cx="14" cy="14" r="12" fill="#dfe9f1" stroke="#78879a" stroke-width="2"/><path d="M9 7h8l4 4v11H9z" fill="#fff" stroke="#78879a" stroke-width="1.5"/><path d="m23 22 9 10" stroke="#78879a" stroke-width="5"/></svg></button>
      <button class="ring end" aria-label="Options"><svg viewBox="0 0 16 16"><circle cx="8" cy="8" r="6" fill="none" stroke="#8497ad" stroke-width="2"/><path d="M4 8h8" stroke="#8497ad" stroke-width="2"/></svg></button>
    </div>
  </div>
</main>

<footer class="status">
  <div class="status-bar"><span class="msg">Select axis. [Ctrl] (or [Shift])+click to deselect</span><span class="num">1</span><span class="num">1</span></div>
  <div class="taskbar"><i></i><i></i></div>
</footer>

<div class="dialog" role="dialog" aria-label="Revolve">
  <div class="dialog-title"><span>Revolve</span><button aria-label="Close"><svg viewBox="0 0 24 22"><path d="m2 2h6l4 5 4-5h6l-7 9 7 9h-6l-4-5-4 5H2l7-9z" fill="#fff" stroke="#633" stroke-width="1.5"/></svg></button></div>
  <form class="dialog-body">
    <div class="dtabs"><button type="button" class="on">Shape</button><button type="button">More</button></div>
    <div class="page">
      <div class="col-a">
        <div class="pick"><button type="button" class="ibtn focus" id="pf"><svg viewBox="0 0 40 40"><path d="M1 1h38v38H1z" fill="#f5efe6" stroke="#444" stroke-width="1.5" stroke-dasharray="2 3"/><path d="M8 34h26" stroke="#ef8490" stroke-width="4"/><use href="#cursor" x="7" y="3" width="22" height="29" fill="#fff"/></svg></button><label for="pf">Profile</label></div>
        <div class="pick"><button type="button" class="ibtn on" id="ax"><svg viewBox="0 0 40 40"><path d="M8 36h28" stroke="#f0607a" stroke-width="4"/><use href="#cursor" x="8" y="3" width="22" height="29" fill="#c2475a"/></svg></button><label for="ax">Axis</label></div>
        <div class="pick"><button type="button" class="ibtn faint" id="so" disabled><svg viewBox="0 0 40 40"><path d="M5 35h29" stroke="#cf1a7e" stroke-width="4"/><use href="#cursor" x="7" y="2" width="20" height="28" fill="#ccc" opacity=".5"/></svg></button><label for="so">Solids</label></div>
        <fieldset class="output"><legend>Output</legend>
          <button type="button" class="ibtn on" aria-label="Solid"><svg viewBox="0 0 40 40"><path d="M6 14c2-5 5-8 9-9h20v20c-3 4-5 8-9 10H6z" fill="#fbd02c" stroke="#8a4a10" stroke-width="2"/><path d="m6 14 8-9h21l-8 9z" fill="#fff0c8" stroke="#8a4a10"/><path d="m27 14 8-9v20l-8 9z" fill="#f0a11f" stroke="#8a4a10"/></svg></button>
          <button type="button" class="ibtn" aria-label="Surface"><svg viewBox="0 0 40 40"><path d="M5 13 14 4h22v22l-9 9H5z" fill="#d9b7a4"/><path d="M13 13h14v14H13z" fill="#e9edf4"/><path d="M5 35l8-8V13m0 14h14" fill="none" stroke="#6a4a3a" stroke-width="1.5"/><path d="M5 13 14 4h22v22l-9 9H5zM5 13h22v22m0-22 9-9" fill="none" stroke="#2a1d18" stroke-width="3"/></svg></button>
        </fieldset>
      </div>
      <div class="ops">
        <button type="button" class="obtn" disabled aria-label="Join"><svg viewBox="0 0 34 34"><path d="M1 17h32v16H1z" fill="#a3a3a8" stroke="#76767c" stroke-width="2"/><path d="M8 2h18v22H8z" fill="#a3a3a8" stroke="#76767c" stroke-width="2"/></svg></button>
        <button type="button" class="obtn" disabled aria-label="Cut"><svg viewBox="0 0 34 34"><path d="M1 17h32v16H1z" fill="#a3a3a8" stroke="#76767c" stroke-width="2"/><path d="M8 2h18v22H8z" fill="#f5f5f5" stroke="#76767c" stroke-width="2"/><path d="M8 17h18" stroke="#76767c"/></svg></button>
        <button type="button" class="obtn" disabled aria-label="Intersect"><svg viewBox="0 0 34 34"><path d="M1 17h32v16H1z" fill="#dcdcde" stroke="#76767c" stroke-width="2"/><path d="M8 2h18v22H8z" fill="#dcdcde" stroke="#76767c" stroke-width="2"/><path d="M8 17h18v8H8z" fill="#96969c" stroke="#76767c"/></svg></button>
        <button type="button" class="obtn on" aria-label="New solid"><svg viewBox="0 0 36 36"><path d="m4 18 6-7h12v16l-4 8H4z" fill="#fff" stroke="#223" stroke-width="2"/><path d="M10 12h11v15" fill="none" stroke="#d03050" stroke-width="2.5"/><path d="m12 10 8-6M21 30l9-12" stroke="#223c7c" stroke-width="2"/><use href="#star" x="19" y="0" width="16" height="16"/></svg></button>
      </div>
      <div class="col-c">
        <fieldset class="extents"><legend>Extents</legend><select aria-label="Extents"><option>Full</option></select></fieldset>
        <label class="match"><input type="checkbox" disabled>Match shape</label>
      </div>
    </div>
    <div class="dfoot">
      <button type="button" class="help" aria-label="Help"><svg viewBox="0 0 28 32"><use href="#tip"/></svg></button>
      <label class="preview"><input type="checkbox" checked disabled aria-label="Preview"><svg viewBox="0 0 58 28"><path d="M2 10h18l-1 15H7l-5-5zM28 12h19l-2 13H31z" fill="#bdbdbd" stroke="#858585" stroke-width="3"/><path d="M20 13h8M2 10l5-9 4 2M47 12l3-8 5-3 2 3-2 8" fill="none" stroke="#858585" stroke-width="3"/></svg></label>
      <button type="button" class="pbtn" disabled>OK</button>
      <button type="button" class="pbtn">Cancel</button>
    </div>
    <button type="button" class="collapse" aria-label="Collapse"><svg viewBox="0 0 20 18"><path d="m10 0 10 18H0z"/></svg></button>
  </form>
</div>
</div>
</body>
</html>
```
FILE: styles.css
```
* { box-sizing: border-box; }
body { margin: 0; font: 22px/29px "Open Sans", "Noto Sans", sans-serif; color: #3a3a3a; }
button { font: inherit; color: inherit; border: 0; background: none; padding: 0; margin: 0; display: flex; align-items: center; justify-content: center; }
svg { display: block; flex: none; overflow: visible; }
.defs { position: absolute; }
.window { position: relative; display: flex; flex-direction: column; min-height: 100vh; border-left: 3px solid #1450b4; background: #f0eff0; overflow: hidden; }

/* Title bar and tabs */
.top { display: flex; height: 83px; background: #414143; }
.app { position: relative; width: 81px; height: 80px; flex: none; flex-direction: column; justify-content: flex-end; padding-right: 12px; background: linear-gradient(135deg, #b9b9b9, #6c6c6c 60%, #8d8d8d); border: 2px solid #111; font: bold 16px/20px "Open Sans", sans-serif; color: #111; }
.app-logo { width: 38px; height: 54px; }
.app-arrow { position: absolute; right: 4px; top: 34px; width: 13px; height: 9px; fill: #333; }
.top-rows { flex: 1; min-width: 0; }
.titlebar { display: flex; height: 46px; }
.qat, .info { display: flex; align-items: center; background: linear-gradient(#6a6a6a, #8f8f8f 60%, #7c7c7c); }
.qat { width: 520px; padding-left: 19px; gap: 14px; flex: none; }
.tool { width: 32px; height: 32px; flex: none; }
.tool svg { width: 30px; height: 30px; }
.save, .save + .tool { margin-left: 4px; }
.tool.more svg { width: 18px; height: 12px; }
.dot { width: 9px; height: 7px; flex: none; background: #4d4d4d; clip-path: polygon(0 0, 100% 0, 50% 100%); }
.vsep { width: 1px; height: 44px; flex: none; background: #a5a5a5; }
.doc-title { width: 239px; flex: none; display: flex; align-items: center; padding-left: 76px; color: #10182c; padding-bottom: 2px; border-bottom: 2px solid #a9c3d8;
  background: radial-gradient(ellipse 40px 18px at 95% 75%, #d2526e, transparent), radial-gradient(ellipse 50px 14px at 28% 95%, #c08a98, transparent), radial-gradient(ellipse 60px 26px at 8% 70%, #c9e3ea, transparent), linear-gradient(#1c4c94, #5c88c2); }
.info { flex: 1; gap: 16px; padding: 0 10px; min-width: 0; }
.info > * { flex: none; }
.expand { width: 8px; height: 14px; }
.info .search { flex: 0 1 357px; min-width: 60px; height: 40px; margin: 0 -6px 0 -5px; border: 0; background: #f3f3f3; padding: 7px 6px 0; font: italic 21px/26px "Open Sans", sans-serif; color: #333; }
.search::placeholder { color: #808080; opacity: 1; }
.signin { color: #eee; gap: 12px; }
.signin svg { width: 30px; height: 30px; }
.push { margin-left: auto; }
.glass { width: 242px; flex: none; background: linear-gradient(#124a8c, #3c72a8); border-bottom: 2px solid #88b4d0; display: flex; justify-content: flex-end; }
.wincontrols { display: flex; width: 206px; height: 36px; margin-right: 4px; border: 2px solid #a9bdd2; border-top: 0; border-radius: 0 0 8px 8px; overflow: hidden; }
.wincontrols button { width: 55px; background: linear-gradient(#8ea6c2 45%, #2f5382 50%, #47719f); border-right: 1px solid #a9bdd2; }
.wincontrols button.close { flex: 1; background: linear-gradient(#d98f80 45%, #b02a18 50%, #cf5a40); border: 0; }
.wincontrols svg { width: 22px; height: 22px; }
.tabs { display: flex; gap: 3px; height: 37px; padding-left: 7px; overflow: hidden; }
.tabs a { flex: none; padding: 2px 20px 0; line-height: 30px; color: #e8e8e8; text-decoration: none; white-space: nowrap; }
.tabs a.on { margin-top: 3px; padding: 0 18px; line-height: 29px; background: linear-gradient(#d6d6d6, #f6f6f6); border-radius: 3px 3px 0 0; color: #3a3a3a; }
.minimize { margin: 0 0 4px 42px; }
.minimize svg { width: 48px; height: 16px; }

/* Ribbon */
.ribbon { display: flex; border-bottom: 3px solid #7d818a; background: #fdfdfd; }
.panel { display: flex; flex-direction: column; min-width: 0; border-right: 2px solid #a3a3a3; }
.p-sketch { flex: 154 1 0; } .p-prim { flex: 125 1 0; } .p-create { flex: 466 1 0; } .p-modify { flex: 500 1 0; }
.p-work { flex: 184 1 0; } .p-pattern { flex: 96 1 0; } .p-surface { flex: 126 1 0; } .p-plastic { flex: 136 1 0; }
.p-harness { flex: 105 1 0; } .p-convert { flex: 135 1 0; border: 0; }
.panel h2 { margin: 0; height: 37px; padding-bottom: 4px; background: #efefef; border-top: 1px solid #dcdcdc; font: inherit; line-height: 32px; display: flex; justify-content: center; align-items: center; white-space: nowrap; }
.h-arrow { width: 14px; height: 9px; margin-left: 12px; fill: #444; }
.tools { display: flex; height: 152px; padding: 6px 4px 0; }
.big { position: relative; flex-direction: column; justify-content: flex-start; width: 88px; height: 144px; padding-top: 5px; flex: none; white-space: nowrap; border: 1px solid transparent; }
.big > svg:first-child { width: 60px; height: 60px; }
.big span { margin-top: 10px; line-height: 29px; }
.big.wide { width: 100%; }
.big.active { width: 93px; margin: 0 10px 0 1px; background: linear-gradient(#a8ccf0, #b7d8f7); border: 2px solid #3c6e9c; padding-top: 4px; }
.big.mid { width: 76px; }
.big.plane { width: 94px; margin: 0 6px 0 3px; }
.arrow { width: 10px; height: 7px; margin-top: 6px; fill: #444; }
.side-arrow { position: absolute; right: 8px; bottom: 32px; width: 9px; height: 7px; fill: #444; }
.list, .sqs { display: flex; flex-direction: column; gap: 5px; padding-top: 2px; flex: none; }
.list { align-items: flex-start; }
.list button { height: 43px; gap: 11px; white-space: nowrap; }
.list svg, .sq svg { width: 31px; height: 31px; }
.l1 { width: 130px; } .l2 { width: 136px; } .l3 { width: 154px; margin-left: 10px; } .l4 { width: 128px; }
.sq, .list .sq { width: 47px; height: 43px; border: 1px solid #d2d2d6; background: #f4f4f6; }
.list .sq { margin-left: -8px; }
.split { display: flex; }
.drop { width: 23px; border: 1px solid #d2d2d6; border-left: 0; background: #f4f4f6; }
.drop svg { width: 10px; height: 7px; fill: #444; }
.center { justify-content: center; gap: 11px; }
.tight { gap: 4px; }

/* Model browser */
.work { flex: 1; display: flex; min-height: 600px; }
.browser { width: 315px; flex: none; display: flex; flex-direction: column; padding: 5px 6px 7px; border-right: 3px solid #7e8795; }
.grip { display: flex; align-items: center; justify-content: space-between; height: 20px; margin-bottom: 5px; padding-right: 2px; }
.grip i { width: 270px; height: 9px; border: solid #9a9a9a; border-width: 2px 1px 2px 0; }
.grip button { width: 22px; }
.grip svg { width: 12px; height: 12px; }
.browser-head { display: flex; align-items: center; height: 42px; padding: 0 8px 0 16px; background: #a8a7a8; color: #fff; font: bold 21px/28px "DejaVu Sans", sans-serif; }
.browser-head .h-arrow { fill: #fff; margin-left: 8px; width: 16px; }
.browser-head button { margin-left: auto; }
.browser-head button svg { width: 26px; height: 32px; }
.browser-tools { display: flex; align-items: center; gap: 14px; height: 46px; padding: 0 8px; }
.browser-tools svg { width: 28px; height: 26px; }
.browser-tools i { width: 2px; height: 36px; background: #a5a5a5; }
.browser-tools button:last-child { margin-left: 5px; }
.tree { flex: 1; margin-top: 9px; border: 2px solid #6f6f6f; background: #fff; padding: 1px 8px; font: 21px/32px "DejaVu Sans Condensed", "DejaVu Sans", sans-serif; }
.root { display: flex; align-items: center; gap: 5px; height: 32px; }
.root svg { width: 34px; height: 34px; }
.tree ul { list-style: none; margin: 0 0 0 7px; padding: 0; }
.tree li { position: relative; height: 36px; padding: 2px 0 2px 32px; }
.tree li::before { content: ""; position: absolute; left: 0; top: 0; width: 24px; height: 19px; border: solid #8a8a8a; border-width: 0 0 2px 2px; }
.tree li:not(:last-child)::after { content: ""; position: absolute; left: 0; top: 17px; height: 19px; border-left: 2px solid #8a8a8a; }
.tree li.plus::after { content: "+"; left: -7px; top: 9px; width: 17px; height: 17px; border: 2px solid #777; background: #fff; font: bold 18px/12px "DejaVu Sans", sans-serif; text-align: center; color: #111; }
.tree li svg { width: 30px; height: 32px; }

/* Drawing area */
.canvas { position: relative; flex: 1; min-width: 0; background: #c3dcf8; overflow: hidden; }
.drawing { position: absolute; inset: 0; width: 100%; height: 100%; }
.dims text { font: 24px "Open Sans", sans-serif; fill: #3c4a60; }
.triad text { font: 24px "DejaVu Sans Condensed", sans-serif; }
.mdi { position: absolute; right: 4px; top: 12px; display: flex; gap: 16px; }
.mdi svg { width: 24px; height: 24px; }
.viewcube { position: absolute; right: 38px; top: 85px; width: 140px; height: 156px; }
.viewcube text { font: bold 15px "Open Sans", sans-serif; fill: #8290a5; }
.mini { position: absolute; left: 894px; top: 64px; display: flex; flex-direction: column; gap: 17px; }
.mini-row { display: flex; gap: 16px; }
.mini-row.first { margin-left: -25px; gap: 5px; }
.handle { width: 20px; height: 43px; border: 2px solid #9aa0a8; border-radius: 7px; background: linear-gradient(90deg, #ece9e8, #c9c9cb); }
.pill { display: flex; height: 43px; border-radius: 22px; overflow: hidden; }
.seg { gap: 6px; border: solid #8d959f; border-width: 2px 2px 2px 0; background: linear-gradient(#efefef, #c6c8ca); font: 21px/28px "DejaVu Sans Condensed", sans-serif; color: #333; }
.seg:first-child { border-left-width: 2px; border-radius: 22px 0 0 22px; }
.seg:last-child { border-radius: 0 22px 22px 0; }
.seg:only-child { border-radius: 22px; }
.seg svg { width: 30px; height: 30px; }
.seg .tri { width: 16px; height: 12px; fill: #222; }
.s79 { width: 79px; } .s60 { width: 60px; } .s120 { width: 120px; } .s138 { width: 138px; } .s27 { width: 27px; }
.s120, .s138 { justify-content: flex-start; padding-left: 10px; gap: 11px; }
.s27 svg { width: 12px; height: 16px; }
.blue { background: #7190dc; }
.off { opacity: .45; }
.angle { width: 202px; padding: 4px 4px 4px 20px; }
.angle input { width: 100%; height: 31px; border: 0; background: #fff; font: inherit; color: #222; padding: 0 6px; }
.navbar { position: absolute; right: 2px; top: 253px; width: 70px; height: 447px; padding: 6px 0; border: 3px solid #98afc8; border-radius: 12px; background: #d0e1f1; display: flex; flex-direction: column; align-items: center; }
.navbar svg { width: 34px; height: 34px; }
.navbar .ring { align-self: flex-end; margin-right: 8px; }
.navbar .ring svg { width: 16px; height: 16px; }
.navbar .ring.end { margin-top: auto; }
.navbar .wheel { margin: 20px 0 14px; }
.navbar .wheel svg { width: 46px; height: 46px; }
.navbar .ntri { width: 10px; height: 6px; fill: #8595a9; }
.navbar hr { width: 50px; margin: 12px 0; border: 0; border-top: 2px solid #a3b1c2; }
.navbar hr + button { margin-bottom: 12px; }
.navbar hr ~ button + .ntri { margin: 14px 0; }
.navbar .look { margin-bottom: 12px; }

/* Status bar */
.status { flex: none; }
.status-bar { display: flex; height: 49px; background: linear-gradient(#fff, #e9e9e9 30%, #adb0b2); font-size: 23px; line-height: 58px; color: #222; }
.msg { flex: 1; padding-left: 1px; white-space: nowrap; }
.num { width: 78px; padding-left: 17px; border-left: 2px solid #d2d2d2; }
.taskbar { height: 5px; background: #7d9dc0; border-top: 2px solid #3d4a5c; display: flex; gap: 8px; padding-left: 486px; }
.taskbar i { width: 85px; background: #e6ebe6; }

/* Revolve dialog */
.dialog { position: absolute; left: 83px; top: 412px; width: 636px; padding: 0 12px 14px 13px; border: 2px solid #27415a; border-radius: 12px; background: linear-gradient(90deg, #dbe7f6 0, #cfe1f5 35%, #98c0e8 38%, #b5d6f6 70%, #a9cdf0); box-shadow: inset 0 0 0 2px #e3f0fb, 4px 6px 22px 6px #0008; font: 21px/28px "DejaVu Sans Condensed", "DejaVu Sans", sans-serif; color: #1e1e1e; }
.dialog-title { display: flex; justify-content: space-between; height: 56px; line-height: 54px; }
.dialog-title button { width: 94px; height: 38px; border: 2px solid #5c2a2a; border-top: 0; border-radius: 0 0 7px 7px; background: linear-gradient(#e2a69a 45%, #c04030 50%, #cf6048); }
.dialog-title svg { width: 22px; height: 22px; }
.dialog-body { border: 2px solid #56697e; background: #f0eff0; }
.dtabs { display: flex; align-items: flex-end; height: 47px; position: relative; z-index: 1; margin-bottom: -2px; }
.dtabs button { width: 78px; height: 37px; padding: 0 12px 0 0; border: 2px solid #8e8e8e; background: linear-gradient(135deg, #f2f2f2, #d4d4d6); }
.dtabs button.on { width: 90px; height: 40px; padding: 0 4px 2px 0; border-left: 0; border-bottom: 0; background: #fff; }
.dtabs button + button { margin-left: -1px; }
.page { display: flex; margin-right: 3px; height: 348px; padding: 28px 15px 0; background: #fff; border: solid #8e8e8e; border-width: 2px 2px 2px 0; }
.col-a { width: 231px; display: flex; flex-direction: column; padding-top: 4px; }
.pick { display: flex; align-items: center; gap: 11px; margin: 0 0 16px 19px; }
.ibtn, .obtn { width: 48px; height: 48px; border: 2px solid #8b8b8b; border-radius: 6px; background: linear-gradient(#f5f3f2, #d9d7d6); }
.ibtn svg { width: 38px; height: 40px; }
.ibtn.focus { border: 3px solid #3f9db8; }
.ibtn.on, .obtn.on { border-color: #2f6a8c; background: linear-gradient(#d7eaf8 30%, #59a3cf); }
.ibtn.faint { border-color: #c2c2c2; background: #f6f6f6; }
fieldset { margin: 0; border: 2px solid #e0e0e0; border-radius: 5px; padding: 0; min-width: 0; }
legend { padding: 0 6px; line-height: 24px; }
.output { display: flex; gap: 6px; width: 142px; height: 105px; padding: 15px 0 0 17px; }
.output legend { margin-left: -8px; }
.output .ibtn svg { width: 34px; height: 36px; }
.ops { width: 86px; height: 275px; margin-right: 15px; border: 2px solid #e3e3e3; border-radius: 4px; display: flex; flex-direction: column; align-items: center; gap: 5px; padding-top: 18px; }
.obtn { width: 56px; height: 53px; border-color: #bdbdbd; background: #f6f6f6; }
.obtn.on { margin-top: 15px; }
.obtn svg { width: 32px; height: 32px; }
.col-c { flex: 1; margin-top: -12px; }
.extents { position: relative; width: 238px; height: 221px; padding: 17px 5px 0 12px; }
.extents select { width: 216px; height: 42px; appearance: none; border: 2px solid #7d7d7d; border-radius: 6px; padding: 0 6px; font: inherit; color: #222; background: linear-gradient(#ececec, #cfcfd1); }
.extents::after { content: ""; position: absolute; right: 14px; top: 32px; width: 15px; height: 10px; background: #000; clip-path: polygon(0 0, 100% 0, 50% 100%); pointer-events: none; }
.match { display: flex; align-items: center; gap: 6px; margin-top: 36px; color: #7b7b7b; }
input[type=checkbox] { appearance: none; width: 25px; height: 25px; margin: 0; flex: none; border: 2px solid #acacac; background: #f6f6f6; display: grid; place-items: center; }
input[type=checkbox]:checked::before { content: ""; width: 6px; height: 12px; border: solid #a3a3a3; border-width: 0 3px 3px 0; rotate: 40deg; }
.dfoot { display: flex; align-items: center; height: 76px; padding: 4px 13px 0 15px; }
.help { width: 44px; height: 42px; border: 2px solid #7a7a7a; border-radius: 6px; background: linear-gradient(#f4f4f4, #d4d4d4); }
.help svg { width: 27px; height: 31px; }
.preview { display: flex; align-items: center; gap: 11px; width: 120px; height: 46px; margin: 0 22px 0 auto; padding-left: 8px; border: 2px solid #e3e3e3; border-radius: 3px; background: #f5f5f5; }
.preview svg { width: 56px; height: 27px; }
.pbtn { width: 146px; height: 42px; border: 2px solid #6f6f6f; border-radius: 6px; background: linear-gradient(#f4f4f4 45%, #d9d9d9 55%, #d0d0d0); }
.pbtn:disabled { margin-right: 11px; border-color: #b5b5b5; background: #f4f4f4; color: #969696; }
.collapse { width: 100%; height: 26px; border-top: 2px solid #7c7c7c; background: linear-gradient(#f6f6f6, #d5d2d0); }
.collapse svg { width: 19px; height: 17px; }
```
